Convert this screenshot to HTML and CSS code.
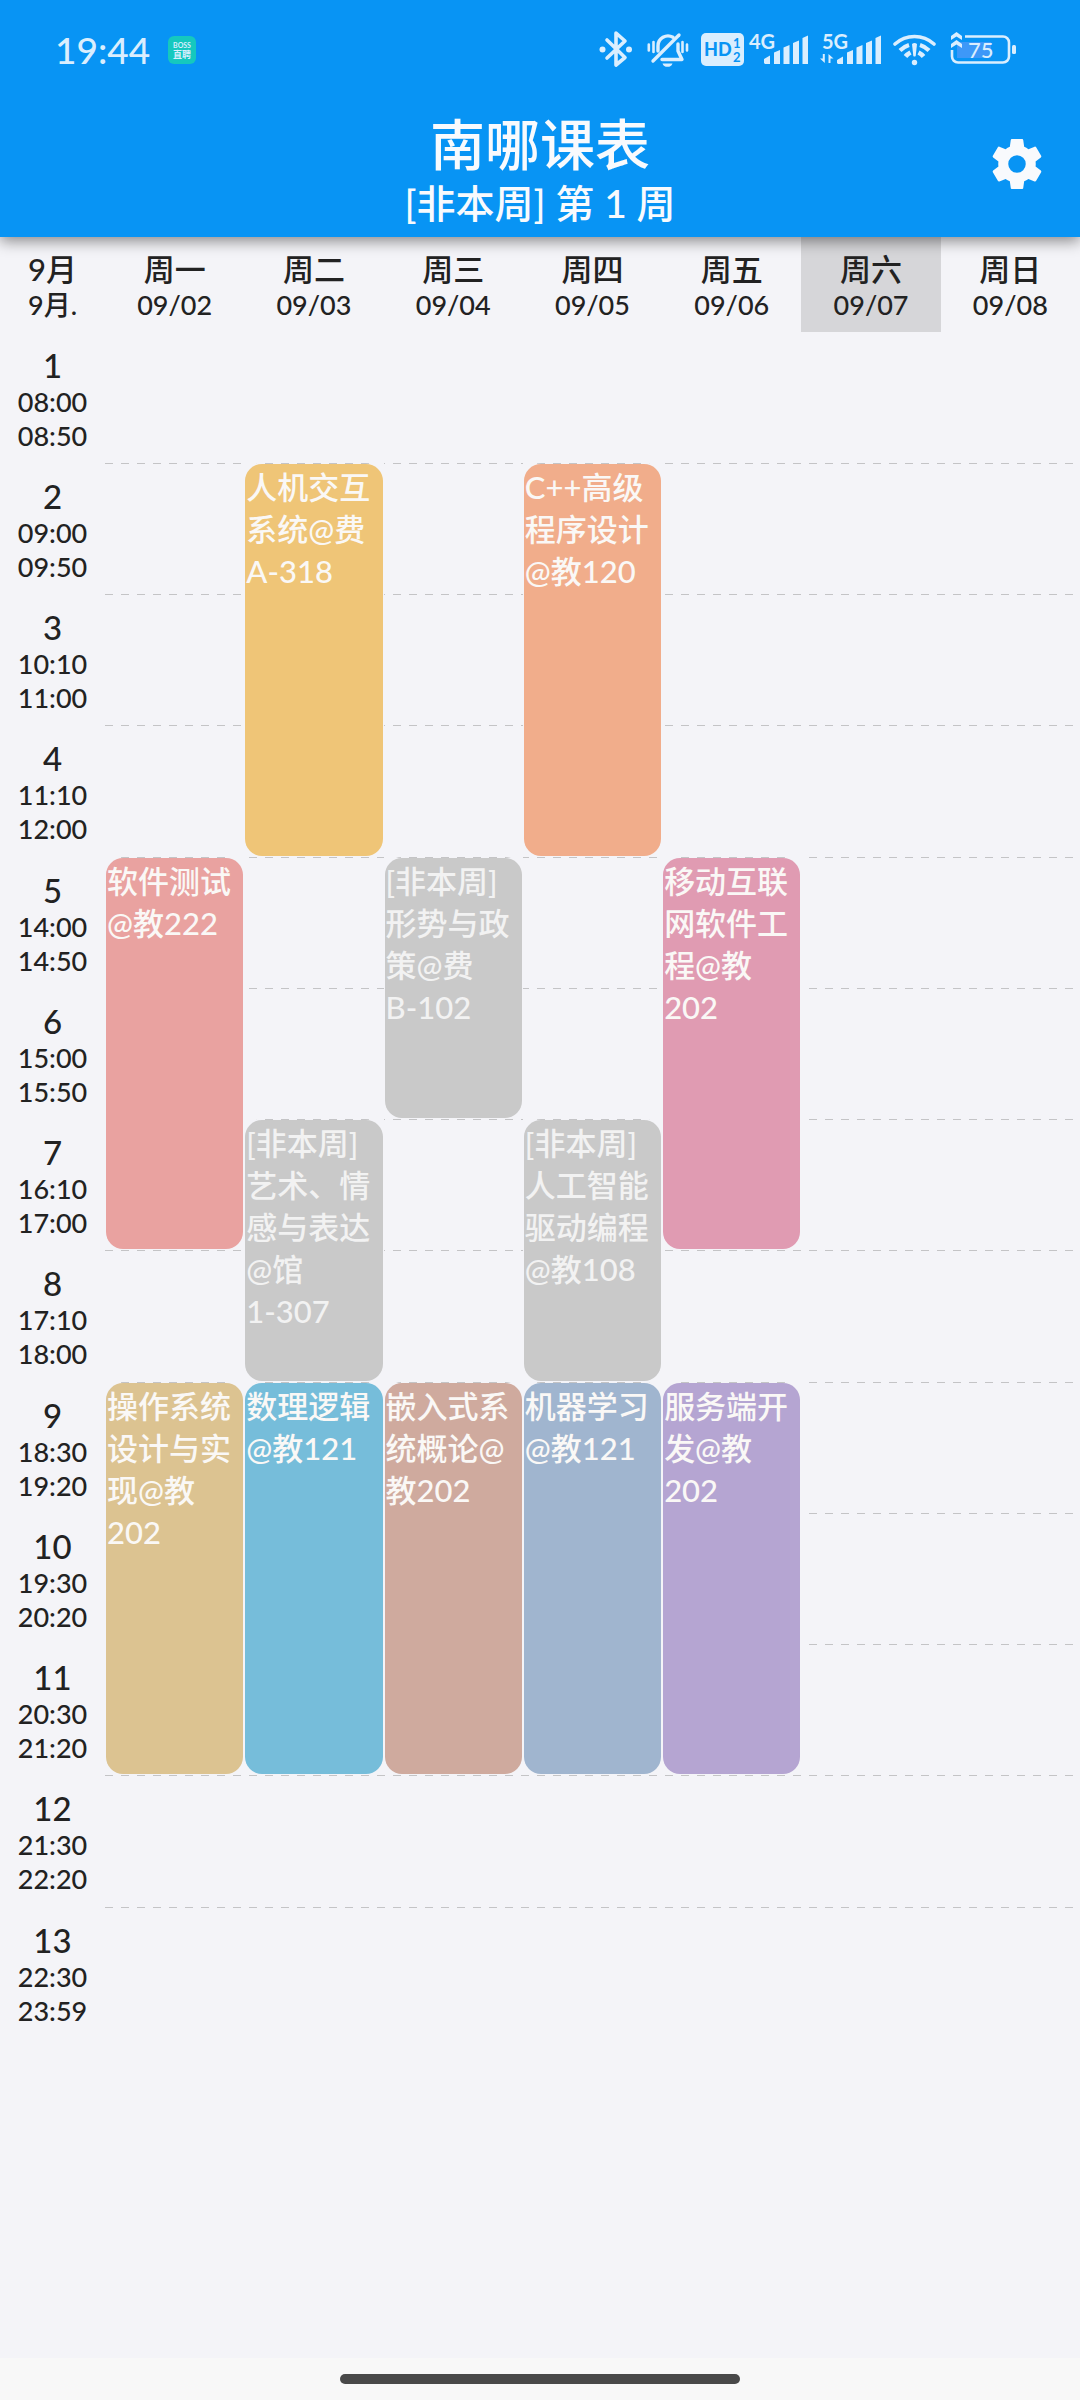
FILE: index.html
```html
<!DOCTYPE html>
<html lang="zh-CN">
<head>
<meta charset="utf-8">
<meta name="viewport" content="width=device-width, initial-scale=1">
<title>南哪课表</title>
<link rel="stylesheet" href="styles.css">
</head>
<body>
<header class="top">
  <div class="status">
    <span class="clock">19:44</span>
    <svg class="notice" viewBox="0 0 28 28" width="28" height="28" aria-hidden="true">
      <rect width="28" height="28" rx="6" fill="#15c8be"/>
      <text x="14" y="12" font-size="7" font-weight="700" text-anchor="middle">BOSS</text>
      <text x="14" y="22" font-size="9" font-weight="700" text-anchor="middle">直聘</text>
    </svg>
    <div class="signals">
      <svg viewBox="0 0 36 40" width="36" height="40" aria-hidden="true">
        <path d="M8 10 26 27.500 17 35V3L26 11 8 28" fill="none" stroke="currentColor" stroke-width="3.600" stroke-linejoin="round" stroke-linecap="round"/>
        <circle cx="3.500" cy="19.500" r="3"/><circle cx="30" cy="19.500" r="3"/>
      </svg>
      <svg viewBox="0 0 42 40" width="42" height="40" aria-hidden="true">
        <g fill="none" stroke="currentColor" stroke-linecap="round" stroke-linejoin="round">
          <path d="M6 31 32 5" stroke-width="3.400"/>
          <path d="M11 21v-5a10 10 0 0 1 15-8.700M31 14v7l4 8.500H15" stroke-width="3.400"/>
          <path d="M1.800 14.500v6M6.500 12v10M35.500 12v10M40 14.500v6" stroke-width="2.600"/>
        </g>
        <path d="M15.500 33.500h10a5.200 4.600 0 0 1-10 0z"/>
      </svg>
      <svg viewBox="0 0 107 40" width="107" height="40" aria-hidden="true">
        <rect y="3" width="43" height="33" rx="5"/>
        <text class="cut" x="3" y="26" font-size="18" font-weight="900">HD</text>
        <text class="cut" x="32" y="18" font-size="13" font-weight="700">1</text>
        <text class="cut" x="32" y="32" font-size="13" font-weight="700">2</text>
        <text x="48" y="19" font-size="20" font-weight="700">4G</text>
        <path d="M63 33v-4l6-3.500v8.500h-5zM73 34V22.500l6-2.500v14zM82.500 34V17.500l6-2.500v19zM92 34V13l6-2.500V34zM101.500 34V8l5.500-2.500V34z"/>
      </svg>
      <svg viewBox="0 0 61 40" width="61" height="40" aria-hidden="true">
        <text x="2" y="19" font-size="20" font-weight="700">5G</text>
        <path d="M4.800 24v9L0 28.500h2.800V24zM8.500 33v-9l5 4.500h-3V33z"/>
        <path d="M17 33v-3l6-3.500V34h-5zM27 34V22.500l6-2.500v14zM36.500 34V17.500l6-2.500v19zM46 34V13l6-2.500V34zM55.500 34V8l5.500-2.500V34z"/>
      </svg>
      <svg viewBox="0 0 45 40" width="45" height="40" aria-hidden="true">
        <g fill="none" stroke="currentColor" stroke-width="3.600">
          <path d="M2 14a29 29 0 0 1 39 0" stroke-linecap="round"/>
          <path d="M7 20.500q4-4 9-5.500M36 20.500q-4-4-9-5.500" stroke-width="4.200"/>
          <path d="M12.500 26.500q2-2.500 5-4M30.500 26.500q-2-2.500-5-4" stroke-width="4.600"/>
        </g>
        <path d="M19 14q2.500-2 5 0l-1.300 12q-1.200 1-2.400 0z"/>
        <circle cx="21.500" cy="32.500" r="2.700"/>
      </svg>
      <svg viewBox="0 0 66 40" width="66" height="40" aria-hidden="true">
        <rect x="7" y="12" width="34" height="16" fill="#3d98f8"/>
        <path d="M15 6.500h38a6 6 0 0 1 6 6v14a6 6 0 0 1-6 6H8a6 6 0 0 1-6-6V20" fill="none" stroke="currentColor" stroke-width="2.600"/>
        <rect x="62" y="15" width="4" height="9" rx="1.500"/>
        <path d="M1 6l5.500-4L12 6v4L6.500 6.500 1 10zM1 14l5.500-4L12 14v4l-5.500-3.500L1 18z"/>
        <text x="18" y="28" font-size="22">75</text>
      </svg>
    </div>
  </div>
  <div class="appbar">
    <div class="heading">
      <h1>南哪课表</h1>
      <p>[非本周] 第 1 周</p>
    </div>
    <button class="settings" type="button" aria-label="设置">
      <svg viewBox="0 0 24 24" width="60" height="60" aria-hidden="true"><path d="M19.430 12.980c.04-.32.07-.64.07-.98s-.03-.66-.07-.98l2.110-1.650c.19-.15.24-.42.12-.64l-2-3.460c-.12-.22-.39-.3-.61-.22l-2.490 1c-.52-.4-1.080-.73-1.690-.98l-.38-2.650C14.460 2.180 14.250 2 14 2h-4c-.25 0-.46.18-.49.42l-.38 2.650c-.61.25-1.170.59-1.690.98l-2.490-1c-.23-.09-.49 0-.61.22l-2 3.460c-.13.22-.07.49.12.64l2.110 1.650c-.04.32-.07.65-.07.98s.03.66.07.98l-2.110 1.650c-.19.15-.24.42-.12.64l2 3.460c.12.22.39.3.61.22l2.490-1c.52.4 1.080.73 1.690.98l.38 2.650c.03.24.24.42.49.42h4c.25 0 .46-.18.49-.42l.38-2.650c.61-.25 1.170-.59 1.690-.98l2.490 1c.23.09.49 0 .61-.22l2-3.460c.12-.22.07-.49-.12-.64zM12 15.500a3.500 3.500 0 1 1 0-7 3.500 3.500 0 0 1 0 7z"/></svg>
    </button>
  </div>
</header>
<main class="content">
  <table class="timetable">
    <colgroup><col class="time-col"><col span="7"></colgroup>
    <thead>
      <tr>
        <th scope="col">9月<small>9月.</small></th>
        <th scope="col">周一<small>09/02</small></th>
        <th scope="col">周二<small>09/03</small></th>
        <th scope="col">周三<small>09/04</small></th>
        <th scope="col">周四<small>09/05</small></th>
        <th scope="col">周五<small>09/06</small></th>
        <th scope="col" class="today">周六<small>09/07</small></th>
        <th scope="col">周日<small>09/08</small></th>
      </tr>
    </thead>
    <tbody>
      <tr><th scope="row">1<small>08:00<br>08:50</small></th><td></td><td></td><td></td><td></td><td></td><td></td><td></td></tr>
      <tr><th scope="row">2<small>09:00<br>09:50</small></th><td></td>
        <td rowspan="3" class="course yellow">人机交互<br>系统@费<br>A-318</td><td></td>
        <td rowspan="3" class="course orange">C++高级<br>程序设计<br>@教120</td><td></td><td></td><td></td></tr>
      <tr><th scope="row">3<small>10:10<br>11:00</small></th><td></td><td></td><td></td><td></td><td></td></tr>
      <tr><th scope="row">4<small>11:10<br>12:00</small></th><td></td><td></td><td></td><td></td><td></td></tr>
      <tr><th scope="row">5<small>14:00<br>14:50</small></th>
        <td rowspan="3" class="course red">软件测试<br>@教222</td><td></td>
        <td rowspan="2" class="course other">[非本周]<br>形势与政<br>策@费<br>B-102</td><td></td>
        <td rowspan="3" class="course pink">移动互联<br>网软件工<br>程@教<br>202</td><td></td><td></td></tr>
      <tr><th scope="row">6<small>15:00<br>15:50</small></th><td></td><td></td><td></td><td></td></tr>
      <tr><th scope="row">7<small>16:10<br>17:00</small></th>
        <td rowspan="2" class="course other">[非本周]<br>艺术、情<br>感与表达<br>@馆<br>1-307</td><td></td>
        <td rowspan="2" class="course other">[非本周]<br>人工智能<br>驱动编程<br>@教108</td><td></td><td></td></tr>
      <tr><th scope="row">8<small>17:10<br>18:00</small></th><td></td><td></td><td></td><td></td><td></td></tr>
      <tr><th scope="row">9<small>18:30<br>19:20</small></th>
        <td rowspan="3" class="course sand">操作系统<br>设计与实<br>现@教<br>202</td>
        <td rowspan="3" class="course blue">数理逻辑<br>@教121</td>
        <td rowspan="3" class="course brown">嵌入式系<br>统概论@<br>教202</td>
        <td rowspan="3" class="course slate">机器学习<br>@教121</td>
        <td rowspan="3" class="course purple">服务端开<br>发@教<br>202</td><td></td><td></td></tr>
      <tr><th scope="row">10<small>19:30<br>20:20</small></th><td></td><td></td></tr>
      <tr><th scope="row">11<small>20:30<br>21:20</small></th><td></td><td></td></tr>
      <tr><th scope="row">12<small>21:30<br>22:20</small></th><td></td><td></td><td></td><td></td><td></td><td></td><td></td></tr>
      <tr><th scope="row">13<small>22:30<br>23:59</small></th><td></td><td></td><td></td><td></td><td></td><td></td><td></td></tr>
    </tbody>
  </table>
</main>
<footer class="navbar"><span class="handle"></span></footer>
</body>
</html>
```
FILE: styles.css
```css
* {
  box-sizing: border-box;
}

body {
  margin: 0;
  min-height: 100vh;
  display: flex;
  flex-direction: column;
  background: #f4f4f8;
  color: #222;
  font-family: Lato, "Noto Sans CJK SC", sans-serif;
  font-weight: 500;
}

/* Header */
.top {
  position: relative;
  background: #0894f4;
  color: #f8fafd;
  box-shadow: 0 4px 14px rgba(0, 0, 0, 0.45);
}

.status {
  display: flex;
  align-items: center;
  height: 90px;
  padding: 10px 64px 0 55px;
  color: #daeefe;
}

.status svg {
  display: block;
  fill: currentColor;
}

.clock {
  font-size: 37px;
  line-height: 40px;
  margin-right: 18px;
}

.signals {
  display: flex;
  gap: 12px;
  margin-left: auto;
}

.signals .cut {
  fill: #0894f4;
}

.appbar {
  display: grid;
  grid-template-columns: 1fr auto 1fr;
  align-items: center;
  height: 147px;
}

.heading {
  grid-column: 2;
  padding-top: 12px;
  text-align: center;
}

.heading h1 {
  margin: 0;
  font-size: 55px;
  line-height: 66px;
  font-weight: 500;
}

.heading p {
  margin: 0;
  font-size: 39px;
  line-height: 52px;
}

.settings {
  justify-self: end;
  margin-right: 33px;
  padding: 0;
  border: 0;
  background: none;
  color: inherit;
}

.settings svg {
  display: block;
  fill: currentColor;
}

/* Timetable */
.content {
  flex: 1;
}

.timetable {
  width: 100%;
  table-layout: fixed;
  border-spacing: 0;
}

.time-col {
  width: 105px;
}

.timetable th,
.timetable td {
  padding: 0;
}

.timetable th {
  padding-top: 2px;
  font-weight: 500;
  text-align: center;
  vertical-align: middle;
}

.timetable small {
  display: block;
  font-size: 27px;
  line-height: 34px;
}

thead tr {
  height: 95px;
}

thead th {
  font-size: 31px;
  line-height: 38px;
}

.today {
  background: #d6d6d9;
}

tbody tr {
  height: 131px;
}

tbody tr:nth-child(4n) {
  height: 132px;
}

tbody tr + tr {
  background: repeating-linear-gradient(90deg, #c4c4c6 0 8px, transparent 8px 16px) 105px 0 / 100% 1px no-repeat;
}

tbody th {
  font-size: 33px;
  line-height: 40px;
}

.timetable .course {
  padding: 2px 0 0 1px;
  border: 1px solid transparent;
  border-radius: 18px;
  background-clip: padding-box;
  vertical-align: top;
  font-size: 31px;
  line-height: 42px;
  color: #faf8f6;
  white-space: nowrap;
}

.yellow { background-color: #efc577; }
.orange { background-color: #f1ad8b; }
.red { background-color: #e9a2a0; }
.pink { background-color: #e09bb2; }
.sand { background-color: #dcc391; }
.blue { background-color: #76bdda; }
.brown { background-color: #cfaa9e; }
.slate { background-color: #a0b5cf; }
.purple { background-color: #b5a5d2; }

.timetable .other {
  background-color: #c9c9c9;
  color: #f2f2f2;
}

/* System navigation */
.navbar {
  display: flex;
  align-items: center;
  justify-content: center;
  height: 42px;
  background: #f8f8f8;
}

.handle {
  width: 37%;
  height: 10px;
  border-radius: 5px;
  background: #494949;
}
```
